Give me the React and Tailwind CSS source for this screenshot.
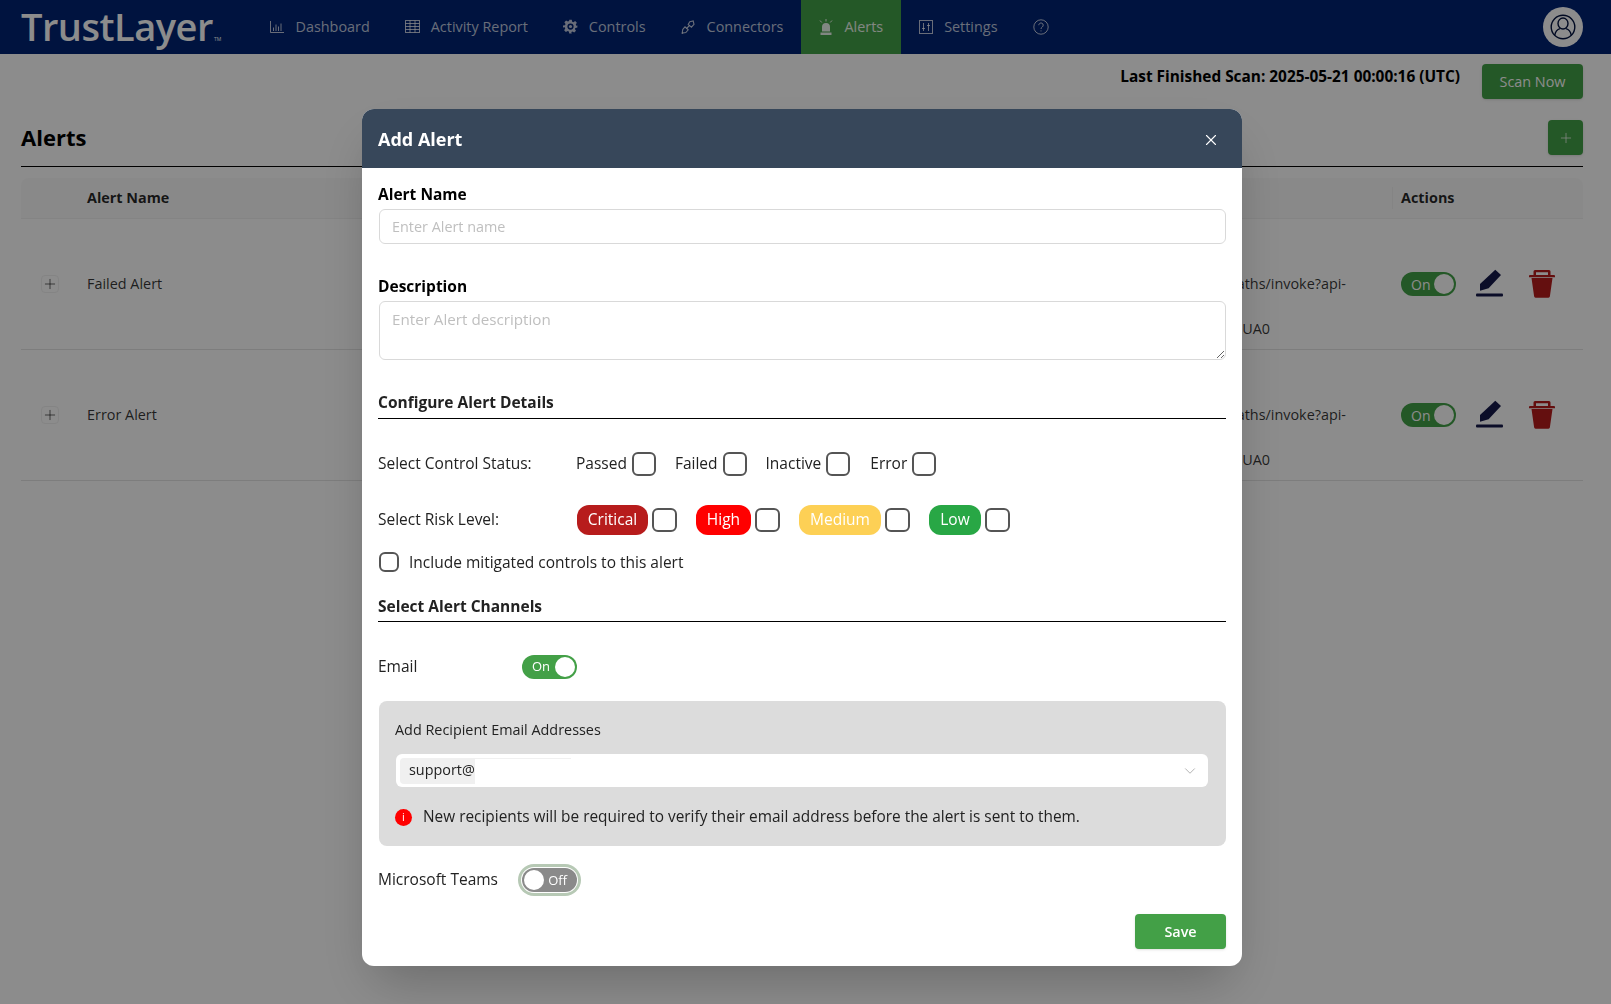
import { Plus, X, ChevronDown } from "lucide-react";

const font = "font-['Open_Sans',sans-serif]";

function DashIcon() {
  return (
    <svg width="14" height="12" viewBox="0 0 14 12" fill="none" stroke="currentColor" strokeWidth="1">
      <path d="M0.500 0v11.500h13.500M3.500 10V6.500M6 10V3.500M8.500 10V5.500M11 10V2.500" />
    </svg>
  );
}

function GridIcon() {
  return (
    <svg width="15" height="13" viewBox="0 0 15 13" fill="none" stroke="currentColor" strokeWidth="1">
      <rect x="0.5" y="0.5" width="14" height="12" />
      <path d="M0.5 3.5h14M0.5 6.5h14M0.5 9.5h14M5 0.5v12M10 0.5v12" />
    </svg>
  );
}

function GearIcon() {
  return (
    <svg width="15" height="15" viewBox="0 0 24 24" fill="currentColor">
      <path
        fillRule="evenodd"
        d="M10 1h4l.7 3.200 1.900.8 2.800-1.800 2.800 2.800-1.800 2.800.8 1.900L23 10.500v3l-3.200.7-.8 1.900 1.800 2.800-2.800 2.800-2.800-1.800-1.900.8L14 23h-4l-.7-3.200-1.900-.8-2.800 1.800-2.800-2.800 1.800-2.800-.8-1.900L0 13.500v-3l3.200-.7.8-1.900L2.200 5.100 5 2.300 7.800 4.100l1.900-.8zM12 7a5 5 0 1 0 0 10 5 5 0 0 0 0-10z"
      />
      <circle cx="12" cy="12" r="2.500" />
    </svg>
  );
}

function LinkIcon() {
  return (
    <svg width="14" height="14" viewBox="0 0 14 14" fill="none" stroke="currentColor" strokeWidth="1.1">
      <path d="M8.800 1.800 12.200 1l.8 3.400-2.600 2.800-3.200-2.800zM1.800 9.300 4 6.800l3.200 3-2.400 2.700-3.600.5z" />
      <path d="M5.500 8.500l3-3M1 13.500l.8-.8" />
    </svg>
  );
}

function SirenIcon() {
  return (
    <svg width="14" height="16" viewBox="0 0 14 16" fill="currentColor">
      <path d="M3 12.500V8a4 4 0 0 1 8 0v4.500zM1.500 13.500h11V16h-11z" />
      <path d="M7 0v2.500M1 1.500l1.800 2M13 1.500l-1.800 2" stroke="currentColor" strokeWidth="1" fill="none" />
    </svg>
  );
}

function SlidersIcon() {
  return (
    <svg width="14" height="14" viewBox="0 0 14 14" fill="none" stroke="currentColor" strokeWidth="1">
      <rect x="0.5" y="0.5" width="13" height="13" />
      <path d="M4.500 3v8M9.500 3v8M3 8.500h3M8 5.500h3" />
    </svg>
  );
}

function HelpIcon() {
  return (
    <svg width="16" height="16" viewBox="0 0 16 16" fill="none" stroke="currentColor" strokeWidth="1">
      <circle cx="8" cy="8" r="7.200" />
      <path d="M5.800 6.200a2.200 2.200 0 1 1 3.400 1.800c-.8.5-1.200 1-1.200 2M8 11.400v1" />
    </svg>
  );
}

function AvatarIcon() {
  return (
    <svg width="26" height="26" viewBox="0 0 26 26" fill="none" stroke="#00123f" strokeWidth="1.4">
      <circle cx="13" cy="13" r="11.800" />
      <ellipse cx="13" cy="9.500" rx="5" ry="5.500" />
      <path d="M4.800 21c.6-3.600 3.200-5.800 5.200-6.400M21.200 21c-.6-3.600-3.200-5.800-5.200-6.400" />
    </svg>
  );
}

function PenIcon() {
  return (
    <svg width="27" height="28" viewBox="0 0 27 28" fill="#14184a">
      <path d="M19.300 0.700 25 6 12.600 19.300 4 21.700V15z" />
      <rect x="0" y="24.500" width="27" height="3" rx="1" />
    </svg>
  );
}

function TrashIcon() {
  return (
    <svg width="26" height="28" viewBox="0 0 26 28" fill="#b71c1c">
      <path
        fillRule="evenodd"
        d="M6 0h14a1.500 1.500 0 0 1 1.500 1.500V5H25a1 1 0 0 1 1 1v1.300H0V6a1 1 0 0 1 1-1h3.500V1.500A1.500 1.500 0 0 1 6 0zm1 2.200V5h12V2.200z"
      />
      <path d="M2.500 8h21l-2.600 18.300a1.500 1.500 0 0 1-1.500 1.400H6.600a1.500 1.500 0 0 1-1.500-1.400z" />
    </svg>
  );
}

function NavItem({ icon, label, active }) {
  return (
    <div className={`flex h-full items-center gap-[11px] px-[17.5px] pb-[1px] text-[14.4px] ${active ? "bg-[#43a047] text-white/90" : "text-white/75"}`}>
      <span className="flex w-[15px] justify-center">{icon}</span>
      <span>{label}</span>
    </div>
  );
}

function Box({ size = "w-6 h-6" }) {
  return <span className={`${size} shrink-0 rounded-md border-2 border-[#555555] bg-white`} />;
}

function StatusCheck({ label, className }) {
  return (
    <label className={`flex items-center gap-[5px] ${className}`}>
      <span>{label}</span>
      <Box />
    </label>
  );
}

function RiskCheck({ label, color, width, className }) {
  return (
    <label className={`flex items-center gap-[4px] ${className}`}>
      <span className={`flex h-[30px] items-center justify-center rounded-xl text-[15.5px] text-white ${color} ${width}`}>{label}</span>
      <Box size="w-[25px] h-6" />
    </label>
  );
}

function AlertRow({ name }) {
  return (
    <div className="flex h-[131px] items-center border-b border-[#e4e4e4] text-[14.4px] text-black/80">
      <span className="ml-[20px] flex h-[18px] w-[18px] items-center justify-center rounded border border-[#f0f0f0]">
        <Plus size={16} strokeWidth={1.1} />
      </span>
      <span className="ml-[28px] w-[300px]">{name}</span>
      <div className="ml-auto w-[240px] pb-[2px] text-right leading-[45px] whitespace-nowrap">
        <div className="invisible">https://api</div>
        <div>apis/v1/paths/invoke?api-</div>
        <div className="pr-[76px]">key=UA0</div>
      </div>
      <div className="ml-[55px] flex w-[182px] items-center">
        <span className="flex h-6 w-[55px] items-center justify-between rounded-full bg-[#43a047] pl-[10px] pr-[2px] text-[14px] text-white">
          On
          <span className="h-5 w-5 rounded-full bg-white" />
        </span>
        <span className="mb-[2px] ml-[20px] flex"><PenIcon /></span>
        <span className="ml-[26px] flex"><TrashIcon /></span>
      </div>
    </div>
  );
}

export default function App() {
  return (
    <div className={`${font} relative h-screen overflow-hidden bg-white text-black`}>
      <header className="flex h-[54px] items-center bg-[#002374] pl-[21px] pr-[28px]">
        <div className="w-[231px] self-start text-[38px] leading-[52px] font-semibold tracking-[-0.5px] text-white">
          TrustLayer<span className="ml-px text-[5px] font-normal tracking-normal">TM</span>
        </div>
        <nav className="flex h-full">
          <NavItem icon={<DashIcon />} label="Dashboard" />
          <NavItem icon={<GridIcon />} label="Activity Report" />
          <NavItem icon={<GearIcon />} label="Controls" />
          <NavItem icon={<LinkIcon />} label="Connectors" />
          <NavItem icon={<SirenIcon />} label="Alerts" active />
          <NavItem icon={<SlidersIcon />} label="Settings" />
          <div className="flex h-full items-center px-[18px] pb-[1px] text-white/75"><HelpIcon /></div>
        </nav>
        <div className="ml-auto flex h-10 w-10 items-center justify-center rounded-full bg-white"><AvatarIcon /></div>
      </header>

      <main className="pl-[21px] pr-[28px]">
        <div className="flex h-[45px] items-center justify-end pt-[10px]">
          <span className="mb-[9px] text-[15.4px] font-bold">Last Finished Scan: 2025-05-21 00:00:16 (UTC)</span>
          <button className="ml-[22px] h-[35px] w-[101px] rounded bg-[#43a047] text-[14.4px] text-white shadow">Scan Now</button>
        </div>
        <div className="mt-[21px] flex h-[47px] items-start justify-between border-b border-black">
          <h1 className="text-[22px] leading-[34px] font-bold">Alerts</h1>
          <button className="flex h-[35px] w-[35px] items-center justify-center rounded bg-[#43a047] text-white/70 shadow">
            <Plus size={16} strokeWidth={1.5} />
          </button>
        </div>
        <div className="mt-[11px] flex h-[41px] items-center rounded-t-lg border-b border-[#f0f0f0] bg-[#fafafa] text-[14.4px] font-bold text-black/85">
          <span className="ml-[66px] w-[300px]">Alert Name</span>
          <span className="ml-auto flex w-[191px] items-center">
            <span className="h-[22px] w-px bg-[#f0f0f0]" />
            <span className="ml-[8px]">Actions</span>
          </span>
        </div>
        <AlertRow name="Failed Alert" />
        <AlertRow name="Error Alert" />
      </main>

      <div className="fixed inset-0 bg-black/45">
        <div className="ml-[362px] mt-[109px] w-[880px] overflow-hidden rounded-xl bg-white shadow-2xl">
          <div className="flex h-[59px] items-center justify-between bg-[#37475a] pl-4 pr-[22px] pt-[2px] text-white">
            <h2 className="text-[18px] font-bold">Add Alert</h2>
            <X size={18} strokeWidth={1.5} />
          </div>
          <div className="h-[798px] px-4 pt-[15px] text-[15.5px] text-[#222222]">
            <div className="text-[15.5px] leading-[22px] font-bold text-black">Alert Name</div>
            <input
              placeholder="Enter Alert name"
              className="mt-[4px] ml-px block h-[35px] w-[847px] rounded-md border border-[#d9d9d9] px-3 text-[14.4px] outline-none placeholder:text-[#bfbfbf]"
            />
            <div className="mt-[31px] text-[15.5px] leading-[22px] font-bold text-black">Description</div>
            <textarea
              placeholder="Enter Alert description"
              className="mt-[4px] ml-px block h-[59px] w-[847px] rounded-md border border-[#d9d9d9] px-3 py-[7px] text-[15.2px] leading-5 outline-none placeholder:text-[#bfbfbf]"
            />
            <div className="mt-[31px] h-[28px] w-[848px] border-b border-black text-[15.5px] leading-[22px] font-bold text-[#222222]">Configure Alert Details</div>

            <div className="mt-[33px] flex h-6 items-center">
              <span className="w-[198px]">Select Control Status:</span>
              <StatusCheck label="Passed" className="mr-[19px]" />
              <StatusCheck label="Failed" className="mr-[19px]" />
              <StatusCheck label="Inactive" className="mr-[20px]" />
              <StatusCheck label="Error" />
            </div>
            <div className="mt-[29px] flex h-[30px] items-center">
              <span className="w-[199px]">Select Risk Level:</span>
              <RiskCheck label="Critical" color="bg-[#b71c1c]" width="w-[71px]" className="mr-[19px]" />
              <RiskCheck label="High" color="bg-[#ff0000]" width="w-[55px]" className="mr-[19px]" />
              <RiskCheck label="Medium" color="bg-[#fdd055]" width="w-[82px]" className="mr-[19px]" />
              <RiskCheck label="Low" color="bg-[#28a745]" width="w-[52px]" />
            </div>
            <label className="mt-[17px] flex h-5 items-center gap-[10px] pl-px">
              <Box size="w-5 h-5" />
              <span className="pt-[2px]">Include mitigated controls to this alert</span>
            </label>
            <div className="mt-[23px] h-[27px] w-[848px] border-b border-black text-[15.5px] leading-[22px] font-bold text-[#222222]">Select Alert Channels</div>

            <div className="mt-[33px] flex h-6 items-center">
              <span className="w-[144px]">Email</span>
              <span className="flex h-6 w-[55px] items-center justify-between rounded-full bg-[#43a047] pl-[10px] pr-[2px] text-[13px] text-white">
                On
                <span className="h-5 w-5 rounded-full bg-white" />
              </span>
            </div>

            <div className="mt-[22px] ml-px h-[145px] w-[847px] rounded-lg bg-[#dcdcdc] px-4 pt-[19px]">
              <div className="text-[14.4px] leading-5">Add Recipient Email Addresses</div>
              <div className="mt-[14px] ml-[1px] flex h-[33px] w-[812px] items-center rounded-md bg-white pl-1 pr-[9px]">
                <span className="flex h-[26px] w-[75px] items-center rounded-l bg-[#f0f0f0] pb-[2px] pl-[9px] text-[14.4px]">support@</span>
                <span className="mb-[25px] h-px w-[96px] bg-[#f0f0f0]" />
                <ChevronDown size={18} strokeWidth={1} className="ml-auto text-[#999999]" />
              </div>
              <div className="mt-[20px] flex items-center gap-[11px] text-[15.4px] leading-5">
                <span className="flex h-[17px] w-[17px] items-center justify-center rounded-full bg-[#ff0000] text-[11px] text-white">i</span>
                <span>New recipients will be required to verify their email address before the alert is sent to them.</span>
              </div>
            </div>

            <div className="mt-[18px] flex h-8 items-center">
              <span className="w-[140px]">Microsoft Teams</span>
              <span className="flex h-8 w-[63px] items-center rounded-full bg-white ring-[3px] ring-inset ring-[#b7c9b5]">
                <span className="mx-[4px] flex h-6 w-[55px] items-center justify-between rounded-full bg-[#8a8a8a] pl-[2px] pr-[10px] text-[13px] text-white">
                  <span className="h-5 w-5 rounded-full bg-white" />
                  <span className="pt-[1px]">Off</span>
                </span>
              </span>
            </div>

            <div className="mt-[18px] flex w-[848px] justify-end">
              <button className="h-[35px] w-[91px] rounded bg-[#43a047] text-[14.4px] font-semibold text-white shadow">Save</button>
            </div>
          </div>
        </div>
      </div>
    </div>
  );
}
